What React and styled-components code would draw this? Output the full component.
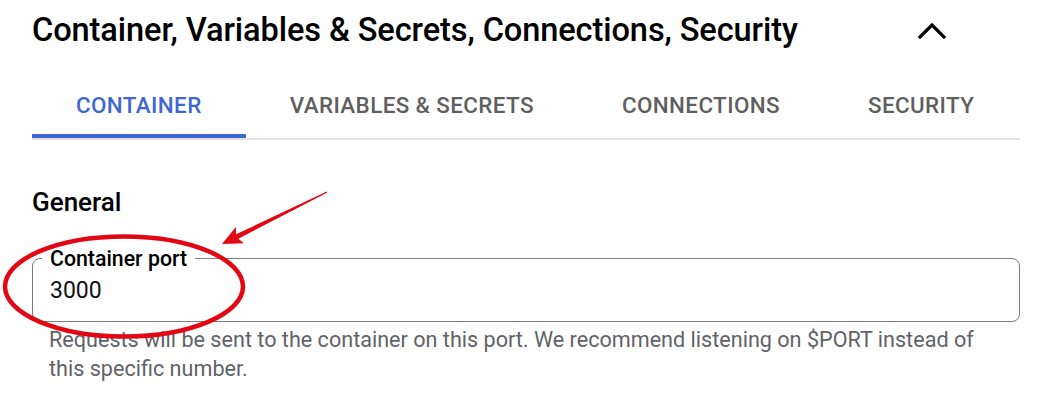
import React from "react";
import styled, { createGlobalStyle } from "styled-components";

const Global = createGlobalStyle`
  html, body { margin: 0; padding: 0; background: #ffffff; }
  body { font-family: Roboto, "Noto Sans", Arial, sans-serif; color: #000; }
  * { box-sizing: border-box; }
`;

const Page = styled.div`
  position: relative;
  width: 1053px;
  height: 420px;
  padding-left: 32px;
  overflow: hidden;
`;

const Panel = styled.div`
  width: 988px;
  display: flex;
  flex-direction: column;
`;

const Header = styled.div`
  height: 60px;
  display: flex;
  align-items: center;
  justify-content: space-between;
`;

const Title = styled.h2`
  margin: 0;
  font-size: 32.6px;
  font-weight: 500;
  line-height: 40px;
  color: #000;
  letter-spacing: -0.1px;
`;

const IconButton = styled.button`
  width: 48px;
  height: 48px;
  margin-right: 64px;
  border: none;
  background: transparent;
  padding: 0;
  display: flex;
  align-items: center;
  justify-content: center;
  margin-top: 2px;
`;

const TabBar = styled.div`
  margin-top: 16px;
  display: flex;
  border-bottom: 2px solid #e2e2e2;
`;

const Tab = styled.div`
  flex-shrink: 0;
  white-space: nowrap;
  height: 62px;
  padding: 0 44px;
  display: flex;
  align-items: center;
  font-size: 22.4px;
  font-weight: 500;
  letter-spacing: 0.4px;
  line-height: 24px;
  color: ${(p) => (p.$active ? "#3f67d4" : "#5f5f5f")};
  border-bottom: 4px solid ${(p) => (p.$active ? "#3f67d4" : "transparent")};
`;

const SectionTitle = styled.h3`
  margin: 46px 0 0;
  font-size: 26px;
  font-weight: 500;
  line-height: 32px;
  color: #000;
`;

const Field = styled.fieldset`
  margin: 30px 0 0;
  padding: 9px 16px 17px 17px;
  border: 1px solid #7c7c7c;
  border-radius: 8px;
  min-width: 0;
`;

const Legend = styled.legend`
  margin-left: -8px;
  padding: 0 8px;
  font-size: 21.3px;
  font-weight: 500;
  line-height: 21px;
  color: #000;
`;

const Value = styled.input`
  display: block;
  width: 100%;
  border: none;
  outline: none;
  padding: 0;
  margin: 0;
  background: transparent;
  font-family: inherit;
  font-size: 23px;
  line-height: 26px;
  height: 26px;
  color: #111;
`;

const Helper = styled.p`
  margin: 4px 0 0;
  padding-left: 17px;
  padding-right: 30px;
  font-size: 21.6px;
  line-height: 28.5px;
  color: #5f6368;
`;

const Annotation = styled.svg`
  position: absolute;
  left: 0;
  top: 0;
  width: 1053px;
  height: 420px;
  pointer-events: none;
`;

const tabs = ["CONTAINER", "VARIABLES & SECRETS", "CONNECTIONS", "SECURITY"];

export default function App() {
  return (
    <>
      <Global />
      <Page>
        <Panel>
          <Header>
            <Title>Container, Variables &amp; Secrets, Connections, Security</Title>
            <IconButton aria-label="Collapse">
              <svg width="28" height="16" viewBox="0 0 28 16">
                <polyline
                  points="2,14 14,2 26,14"
                  fill="none"
                  stroke="#000"
                  strokeWidth="3.2"
                  strokeLinecap="square"
                />
              </svg>
            </IconButton>
          </Header>
          <TabBar>
            {tabs.map((t, i) => (
              <Tab key={t} $active={i === 0}>
                {t}
              </Tab>
            ))}
          </TabBar>
          <SectionTitle>General</SectionTitle>
          <Field>
            <Legend>Container port</Legend>
            <Value readOnly value="3000" />
          </Field>
          <Helper>
            Requests will be sent to the container on this port. We recommend listening on $PORT instead of this
            specific number.
          </Helper>
        </Panel>
        <Annotation viewBox="0 0 1053 420">
          <ellipse cx="124" cy="286.5" rx="119" ry="50" fill="none" stroke="#e30613" strokeWidth="4.5" />
          <polygon
            points="326.8,191.4 236.1,234.3 235.9,227 222,244 243.9,243.2 238.3,238.7 327.4,192.6"
            fill="#e30613"
          />
        </Annotation>
      </Page>
    </>
  );
}
